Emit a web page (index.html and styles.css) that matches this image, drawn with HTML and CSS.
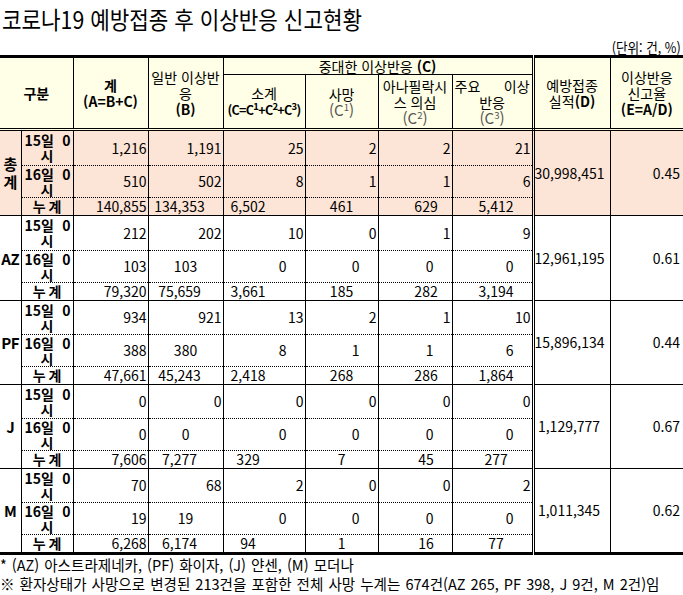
FILE: index.html
```html
<!DOCTYPE html>
<html lang="ko">
<head>
<meta charset="utf-8">
<link rel="stylesheet" href="styles.css">
</head>
<body>
<div class="page">
  <div class="title-row"><h1 class="title">코로나19 예방접종 후 이상반응 신고현황</h1></div>
  <div class="unit-row"><span class="unit">(단위: 건, %)</span></div>
  <table class="tbl">
    <colgroup>
      <col class="w-lab"><col class="w-date"><col class="w-a"><col class="w-b"><col class="w-c"><col class="w-c1"><col class="w-c2"><col class="w-c3"><col class="w-d"><col class="w-e">
    </colgroup>
    <thead>
      <tr class="h1">
        <th colspan="2" rowspan="2" class="bold">구분</th>
        <th rowspan="2" class="bold">계<br>(A=B+C)</th>
        <th rowspan="2">일반 이상반<br>응<br><b>(B)</b></th>
        <th colspan="4">중대한 이상반응 <b>(C)</b></th>
        <th rowspan="2" class="dcol">예방접종<br>실적<b>(D)</b></th>
        <th rowspan="2" class="ecol">이상반응<br>신고율<br><b>(E=A/D)</b></th>
      </tr>
      <tr class="h2">
        <th>소계<br><b class="sm">(C=C<sup>1</sup>+C<sup>2</sup>+C<sup>3</sup>)</b></th>
        <th>사망<br><span class="cc">(C<sup>1</sup>)</span></th>
        <th>아나필락시<br>스 의심<br><span class="cc">(C<sup>2</sup>)</span></th>
        <th><span class="jus"><span>주요</span><span>이상</span></span>반응<br><span class="cc">(C<sup>3</sup>)</span></th>
      </tr>
    </thead>
    <tbody>
      <tr class="r15 peach tall">
        <td rowspan="3" class="lab vert">총<br>계</td>
        <td class="dt"><div class="dl"><span>15일</span><span>0</span></div>시</td>
        <td class="r">1,216</td><td class="r">1,191</td><td class="r">25</td><td class="r">2</td><td class="r">2</td><td class="r">21</td>
        <td rowspan="3" class="dcol num-d">30,998,451</td><td rowspan="3" class="ecol num-e">0.45</td>
      </tr>
      <tr class="r16 peach">
        <td class="dt"><div class="dl"><span>16일</span><span>0</span></div>시</td>
        <td class="r">510</td><td class="r">502</td><td class="r">8</td><td class="r">1</td><td class="r">1</td><td class="r">6</td>
      </tr>
      <tr class="rsum peach">
        <td class="dt sum">누계</td>
        <td class="r">140,855</td><td class="s-b">134,353</td><td class="s-c">6,502</td><td class="s-c1">461</td><td class="s-c2">629</td><td class="s-c3">5,412</td>
      </tr>

      <tr class="r15 tall">
        <td rowspan="3" class="lab">AZ</td>
        <td class="dt"><div class="dl"><span>15일</span><span>0</span></div>시</td>
        <td class="r">212</td><td class="r">202</td><td class="r">10</td><td class="r">0</td><td class="r">1</td><td class="r">9</td>
        <td rowspan="3" class="dcol num-d">12,961,195</td><td rowspan="3" class="ecol num-e">0.61</td>
      </tr>
      <tr class="r16">
        <td class="dt"><div class="dl"><span>16일</span><span>0</span></div>시</td>
        <td class="r">103</td><td class="c">103</td><td class="rp">0</td><td class="rp">0</td><td class="rp">0</td><td class="rp">0</td>
      </tr>
      <tr class="rsum">
        <td class="dt sum">누계</td>
        <td class="r">79,320</td><td class="s-b">75,659</td><td class="s-c">3,661</td><td class="s-c1">185</td><td class="s-c2">282</td><td class="s-c3">3,194</td>
      </tr>

      <tr class="r15">
        <td rowspan="3" class="lab">PF</td>
        <td class="dt"><div class="dl"><span>15일</span><span>0</span></div>시</td>
        <td class="r">934</td><td class="r">921</td><td class="r">13</td><td class="r">2</td><td class="r">1</td><td class="r">10</td>
        <td rowspan="3" class="dcol num-d">15,896,134</td><td rowspan="3" class="ecol num-e">0.44</td>
      </tr>
      <tr class="r16">
        <td class="dt"><div class="dl"><span>16일</span><span>0</span></div>시</td>
        <td class="r">388</td><td class="c">380</td><td class="rp">8</td><td class="rp">1</td><td class="rp">1</td><td class="rp">6</td>
      </tr>
      <tr class="rsum">
        <td class="dt sum">누계</td>
        <td class="r">47,661</td><td class="s-b">45,243</td><td class="s-c">2,418</td><td class="s-c1">268</td><td class="s-c2">286</td><td class="s-c3">1,864</td>
      </tr>

      <tr class="r15">
        <td rowspan="3" class="lab">J</td>
        <td class="dt"><div class="dl"><span>15일</span><span>0</span></div>시</td>
        <td class="r">0</td><td class="r">0</td><td class="r">0</td><td class="r">0</td><td class="r">0</td><td class="r">0</td>
        <td rowspan="3" class="dcol num-d">1,129,777</td><td rowspan="3" class="ecol num-e">0.67</td>
      </tr>
      <tr class="r16">
        <td class="dt"><div class="dl"><span>16일</span><span>0</span></div>시</td>
        <td class="r">0</td><td class="c">0</td><td class="rp">0</td><td class="rp">0</td><td class="rp">0</td><td class="rp">0</td>
      </tr>
      <tr class="rsum">
        <td class="dt sum">누계</td>
        <td class="r">7,606</td><td class="s-b">7,277</td><td class="s-c">329</td><td class="s-c1">7</td><td class="s-c2">45</td><td class="s-c3">277</td>
      </tr>

      <tr class="r15">
        <td rowspan="3" class="lab">M</td>
        <td class="dt"><div class="dl"><span>15일</span><span>0</span></div>시</td>
        <td class="r">70</td><td class="r">68</td><td class="r">2</td><td class="r">0</td><td class="r">0</td><td class="r">2</td>
        <td rowspan="3" class="dcol num-d">1,011,345</td><td rowspan="3" class="ecol num-e">0.62</td>
      </tr>
      <tr class="r16">
        <td class="dt"><div class="dl"><span>16일</span><span>0</span></div>시</td>
        <td class="r">19</td><td class="c">19</td><td class="rp">0</td><td class="rp">0</td><td class="rp">0</td><td class="rp">0</td>
      </tr>
      <tr class="rsum last">
        <td class="dt sum">누계</td>
        <td class="r">6,268</td><td class="s-b">6,174</td><td class="s-c">94</td><td class="s-c1">1</td><td class="s-c2">16</td><td class="s-c3">77</td>
      </tr>
    </tbody>
  </table>
  <div class="notes">
    <p class="note">* (AZ) 아스트라제네카, (PF) 화이자, (J) 얀센, (M) 모더나</p>
    <p class="note">※ 환자상태가 사망으로 변경된 213건을 포함한 전체 사망 누계는 674건(AZ 265, PF 398, J 9건, M 2건)임</p>
  </div>
</div>
</body>
</html>
```

FILE: styles.css
```css
html, body {
  margin: 0;
  padding: 0;
  background: #fff;
}
body {
  font-family: "Noto Sans CJK KR", "Noto Sans", sans-serif;
  color: #000;
}
.page {
  width: 683px;
}
.title-row {
  height: 34px;
  padding-left: 2px;
}
.title {
  margin: 0;
  display: inline-block;
  font-size: 24px;
  font-weight: normal;
  line-height: 38px;
  height: 34px;
  transform: scaleX(0.885);
  transform-origin: left center;
  white-space: nowrap;
}
.unit-row {
  height: 21px;
  text-align: right;
  padding-right: 2px;
}
.unit {
  display: inline-block;
  font-size: 14px;
  line-height: 24px;
  height: 21px;
  transform: scaleX(0.9);
  transform-origin: right center;
}
.tbl {
  border-collapse: collapse;
  table-layout: fixed;
  width: 683px;
  font-size: 14px;
}
.w-lab { width: 21px; }
.w-date { width: 52px; }
.w-a { width: 75px; }
.w-b { width: 75px; }
.w-c { width: 82px; }
.w-c1 { width: 73px; }
.w-c2 { width: 74px; }
.w-c3 { width: 81px; }
.w-d { width: 77px; }
.w-e { width: 73px; }
.tbl th, .tbl td {
  border: 1px solid #000;
  padding: 0;
  overflow: visible;
  white-space: nowrap;
}
.tbl tr > :first-child { border-left: none; }
.tbl tr > .ecol { border-right: none; }
.tbl th {
  background: #fffee6;
  font-weight: normal;
  font-size: 14px;
  line-height: 16px;
  text-align: center;
  vertical-align: middle;
}
.tbl th.bold { font-weight: bold; }
.h1 th { border-top: 3px solid #000; height: 15px; }
.h2 th { height: 53px; }
.tbl thead tr.h2 th,
.tbl thead th[rowspan] { border-bottom: 3px double #000; }
.tbl th b { font-weight: bold; }
.sm {
  font-size: 12.5px;
  letter-spacing: -0.7px;
}
sup {
  font-size: 9.5px;
  line-height: 0;
  vertical-align: 5px;
}
.cc {
  color: #555;
  font-size: 15px;
}
.jus {
  display: flex;
  justify-content: space-between;
  padding: 0 2px;
}
.dcol { border-left: 3px double #000 !important; }

.tbl td {
  line-height: 15px;
  vertical-align: middle;
}
.peach td { background: #fce4d6; }
.r15 td { height: 33px; }
.r15.tall td { height: 34px; }
.r16 td { height: 31px; }
.rsum td { height: 17px; }
.r15 td:not([rowspan]) { border-bottom-style: dotted; }
.r16 td { border-top-style: dotted; border-bottom-style: dotted; }
.rsum td { border-top-style: dotted; }
.last td { border-bottom: 3px solid #000; }
.tbl td.num-d, .tbl td.num-e, .tbl td.lab { border-bottom: 1px solid #000; }
.tbl tr.r15:nth-last-child(3) td[rowspan] { border-bottom: 3px solid #000; }

.lab {
  font-weight: bold;
  font-size: 15px;
  text-align: center;
  letter-spacing: -0.5px;
}
.vert { line-height: 18px !important; }
.dt {
  font-weight: bold;
  font-size: 14px;
  text-align: center;
}
.dl {
  display: flex;
  justify-content: space-between;
  padding: 0 2px 0 3px;
}
.sum { letter-spacing: 3px; text-indent: 3px; }
.r { text-align: right; padding-right: 1px !important; }
.c { text-align: center; }
.rp { text-align: right; padding-right: 18px !important; }
.s-b { text-align: center; padding-right: 12px !important; }
.s-c { text-align: center; padding-right: 32px !important; }
.s-c1 { text-align: center; }
.s-c2 { text-align: center; padding-left: 22px !important; }
.s-c3 { text-align: center; padding-left: 8px !important; }
.num-d { text-align: center; padding-right: 6px !important; }
.num-e { text-align: right; padding-right: 3px !important; }

.notes {
  padding-top: 0;
}
.note {
  margin: 0;
  font-size: 15px;
  line-height: 19px;
  white-space: nowrap;
  word-spacing: 1px;
  transform: scaleX(0.97);
  transform-origin: left center;
}
```
